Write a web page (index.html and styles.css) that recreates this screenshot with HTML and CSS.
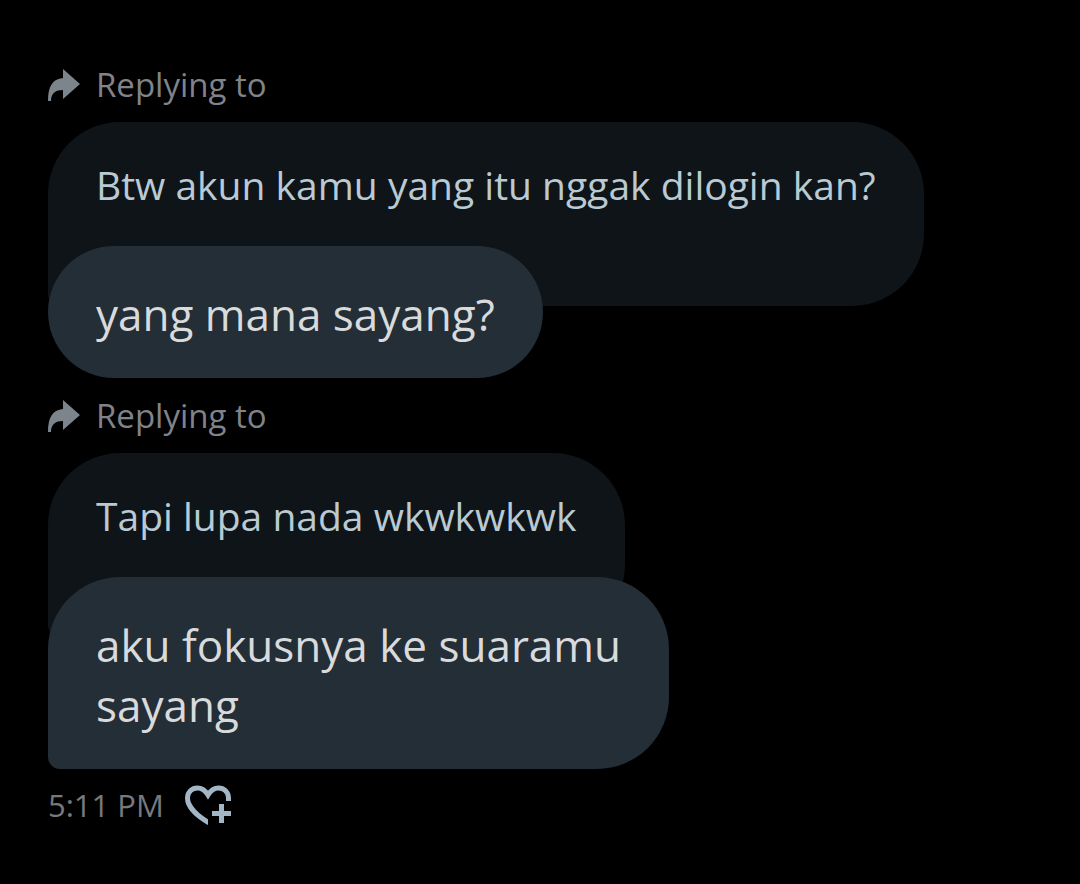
FILE: index.html
```html
<!DOCTYPE html>
<html lang="id">
<head>
    <meta charset="UTF-8">
    <meta name="viewport" content="width=device-width, initial-scale=1.0">
    <title>Messages</title>
    <link rel="stylesheet" href="styles.css">
</head>
<body>
    <main class="chat">
        <article class="message">
            <div class="reply-label">
                <svg class="reply-icon" viewBox="0 0 32 34" aria-hidden="true">
                    <path d="M15 1L32 16L15 31V22C8 22 3 25 3 33H0C0 19 4 11 15 10Z"/>
                </svg>
                <span>Replying to</span>
            </div>
            <div class="quote">Btw akun kamu yang itu nggak dilogin kan?</div>
            <div class="bubble">yang mana sayang?</div>
        </article>

        <article class="message">
            <div class="reply-label">
                <svg class="reply-icon" viewBox="0 0 32 34" aria-hidden="true">
                    <path d="M15 1L32 16L15 31V22C8 22 3 25 3 33H0C0 19 4 11 15 10Z"/>
                </svg>
                <span>Replying to</span>
            </div>
            <div class="quote">Tapi lupa nada wkwkwkwk</div>
            <div class="bubble last">aku fokusnya ke suaramu<br>sayang</div>
        </article>

        <footer class="meta">
            <time datetime="17:11">5:11 PM</time>
            <button class="react" type="button" aria-label="Add reaction">
                <svg viewBox="0 0 48 42" aria-hidden="true">
                    <clipPath id="heart-cut">
                        <path d="M0 0H48V17H24V42H0Z"/>
                    </clipPath>
                    <path clip-path="url(#heart-cut)" d="M29 41C12 32 3.500 22 3.500 14C3.500 8 8 4 13.500 4C18 4 21 6 24 11C27 6 30 4 34.500 4C40 4 44.500 8 44.500 14V17"/>
                    <path d="M37.500 20V39M28 29.500H47"/>
                </svg>
            </button>
        </footer>
    </main>
</body>
</html>
```

FILE: styles.css
```css
* {
    box-sizing: border-box;
}

body {
    margin: 0;
    background: #000;
    font-family: "Open Sans", sans-serif;
}

.chat {
    padding: 60px 48px;
}

.message {
    display: flex;
    flex-direction: column;
    align-items: flex-start;
    margin-bottom: 13px;
}

.reply-label {
    display: flex;
    align-items: center;
    gap: 16px;
    height: 50px;
    margin-bottom: 12px;
    color: #808389;
    font-size: 33px;
    line-height: 48px;
}

.reply-icon {
    width: 32px;
    height: 34px;
    fill: #7c848c;
}

.quote {
    padding: 35px 48px 93px;
    border-radius: 72px 72px 72px 12px;
    background: #0f1418;
    color: #b9cad3;
    font-size: 39px;
    line-height: 56px;
}

.bubble {
    position: relative;
    margin-top: -60px;
    padding: 38px 48px 34px;
    border-radius: 72px;
    background: #242e36;
    color: #d9dadc;
    font-size: 44px;
    line-height: 60px;
}

.bubble.last {
    border-bottom-left-radius: 12px;
}

.meta {
    display: flex;
    align-items: center;
    gap: 20px;
    color: #77797d;
    font-size: 31px;
    line-height: 46px;
}

.react {
    padding: 0;
    border: none;
    background: none;
    cursor: pointer;
}

.react svg {
    display: block;
    width: 48px;
    height: 42px;
    fill: none;
    stroke: #a3b6c6;
    stroke-width: 5;
}
```
